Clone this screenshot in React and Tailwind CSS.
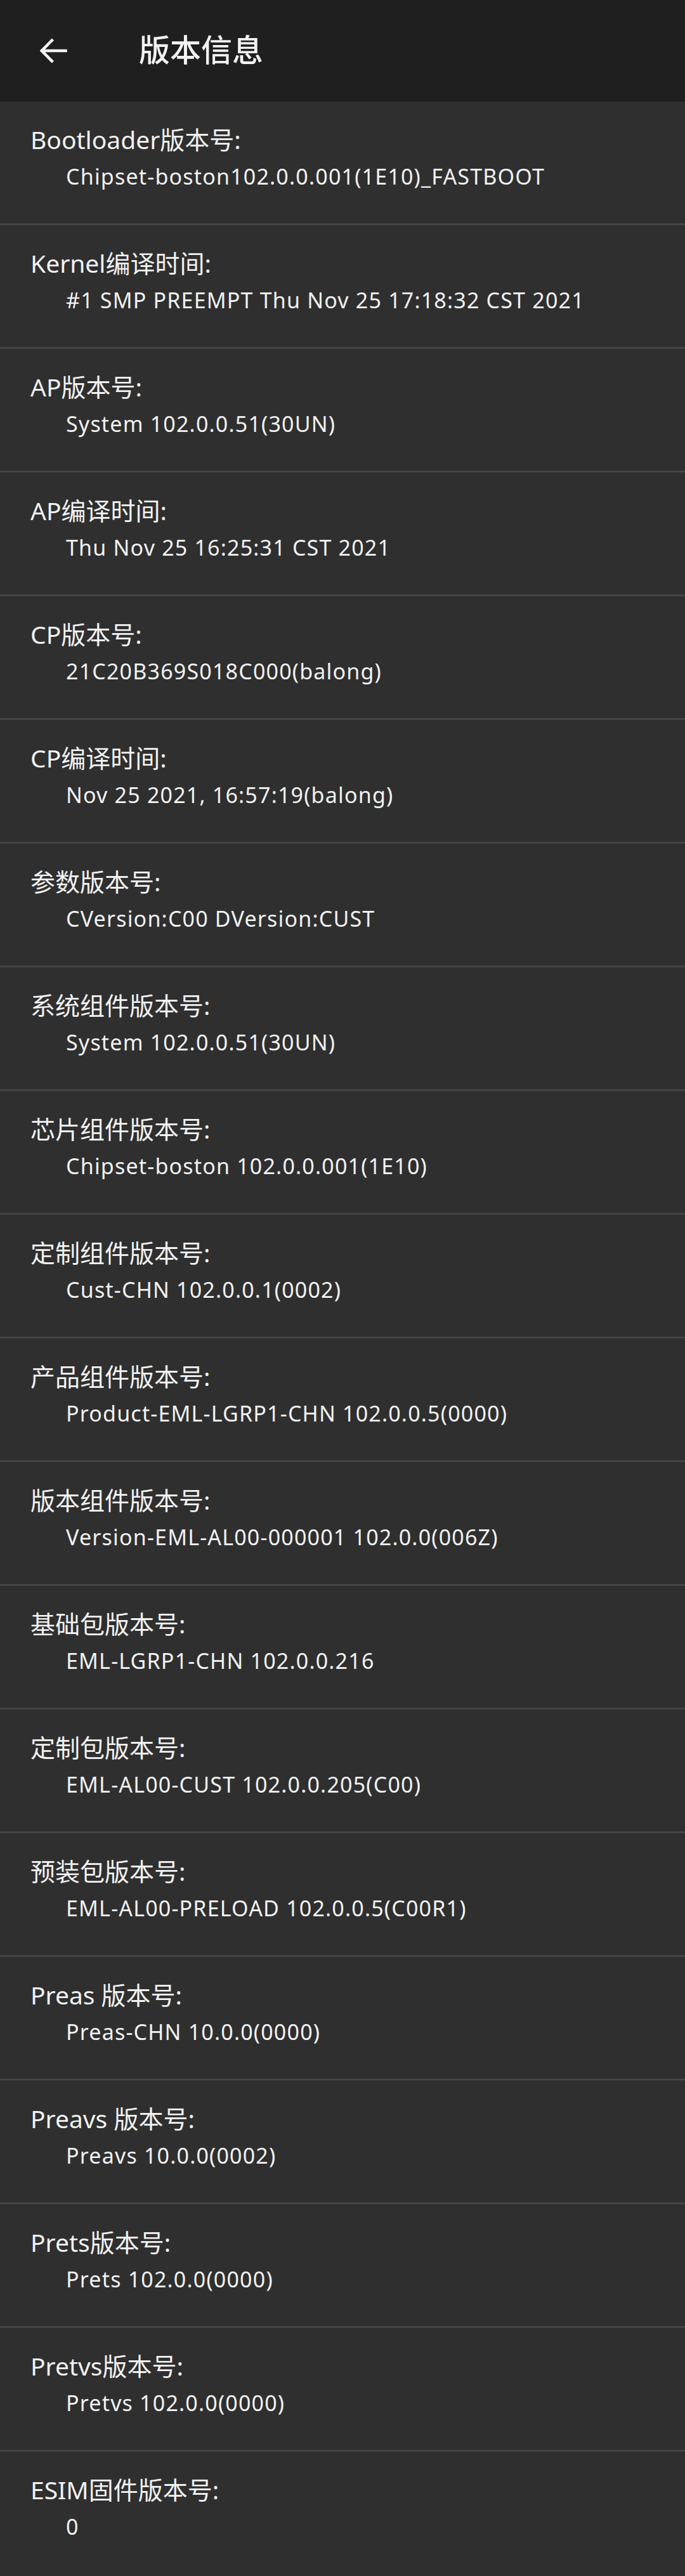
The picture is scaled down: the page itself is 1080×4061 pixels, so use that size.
import React from 'react';

const items = [
  ['Bootloader版本号:', 'Chipset-boston102.0.0.001(1E10)_FASTBOOT'],
  ['Kernel编译时间:', '#1 SMP PREEMPT Thu Nov 25 17:18:32 CST 2021'],
  ['AP版本号:', 'System 102.0.0.51(30UN)'],
  ['AP编译时间:', 'Thu Nov 25 16:25:31 CST 2021'],
  ['CP版本号:', '21C20B369S018C000(balong)'],
  ['CP编译时间:', 'Nov 25 2021, 16:57:19(balong)'],
  ['参数版本号:', 'CVersion:C00 DVersion:CUST'],
  ['系统组件版本号:', 'System 102.0.0.51(30UN)'],
  ['芯片组件版本号:', 'Chipset-boston 102.0.0.001(1E10)'],
  ['定制组件版本号:', 'Cust-CHN 102.0.0.1(0002)'],
  ['产品组件版本号:', 'Product-EML-LGRP1-CHN 102.0.0.5(0000)'],
  ['版本组件版本号:', 'Version-EML-AL00-000001 102.0.0(006Z)'],
  ['基础包版本号:', 'EML-LGRP1-CHN 102.0.0.216'],
  ['定制包版本号:', 'EML-AL00-CUST 102.0.0.205(C00)'],
  ['预装包版本号:', 'EML-AL00-PRELOAD 102.0.0.5(C00R1)'],
  ['Preas 版本号:', 'Preas-CHN 10.0.0(0000)'],
  ['Preavs 版本号:', 'Preavs 10.0.0(0002)'],
  ['Prets版本号:', 'Prets 102.0.0(0000)'],
  ['Pretvs版本号:', 'Pretvs 102.0.0(0000)'],
  ['ESIM固件版本号:', '0'],
];

const App = () => {
  return (
    <div className="min-h-screen bg-[#2f2f2f] text-[#f2f2f2] font-['Noto_Sans','Noto_Sans_CJK_SC',sans-serif]">
      {/* Top bar */}
      <header className="h-[160px] bg-[#1f1f1f] flex items-center">
        <div className="w-[170px] h-full flex items-center pl-[58px]">
          <svg width="52" height="52" viewBox="0 0 24 24" fill="none" stroke="#f4f4f4" strokeWidth="2.1" strokeLinecap="square" strokeLinejoin="miter">
            <path d="M21 12H4" />
            <path d="M11 4.5L3.6 12L11 19.5" />
          </svg>
        </div>
        <h1 className="text-[49px] leading-none font-medium -mt-[4px] ml-[49px]">版本信息</h1>
      </header>

      {/* Info rows */}
      <main className="divide-y-[3px] divide-[#454545]">
        {items.map(([label, value]) => (
          <div key={label} className="h-[195px] pt-[38px] pl-[48px]">
            <div className="text-[39px] leading-[44px]">{label}</div>
            <div className="text-[34px] leading-[44px] tracking-[0.035em] mt-[14px] pl-[56px]">{value}</div>
          </div>
        ))}
      </main>
    </div>
  );
};

export default App;
